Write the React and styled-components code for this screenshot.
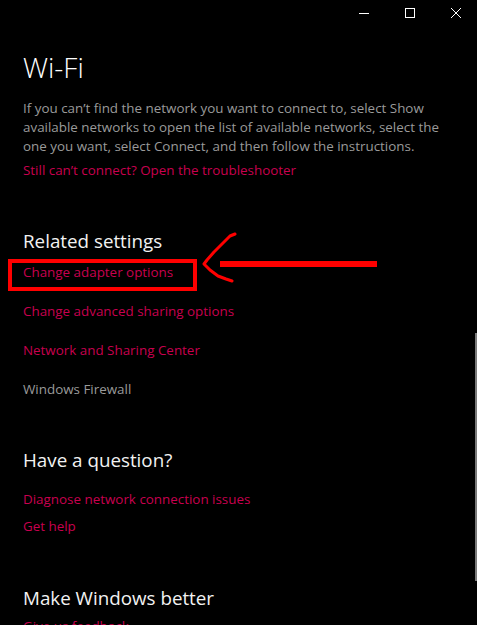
import React from 'react';
import styled, { createGlobalStyle } from 'styled-components';

const GlobalStyle = createGlobalStyle`
  html, body {
    margin: 0;
    padding: 0;
    background: #000;
    overflow: hidden;
  }
  body {
    font-family: "Open Sans", "Noto Sans", sans-serif;
  }
`;

const Window = styled.div`
  position: relative;
  width: 477px;
  height: 625px;
  background: #000;
  overflow: hidden;
`;

const TitleBar = styled.div`
  display: flex;
  justify-content: flex-end;
  height: 26px;
  margin-right: -2px;
`;

const CaptionButton = styled.div`
  width: 46px;
  display: flex;
  align-items: center;
  justify-content: center;
  svg {
    display: block;
  }
`;

const Content = styled.main`
  padding: 0 0 0 23px;
`;

const PageTitle = styled.h1`
  margin: 22px 0 0;
  font-size: 28px;
  font-weight: 300;
  line-height: 38px;
  color: #fff;
`;

const Description = styled.p`
  margin: 13px 0 0;
  width: 430px;
  font-size: 13.4px;
  line-height: 19px;
  color: #9a9a9a;
`;

const Section = styled.section`
  margin-top: ${(p) => p.$gap}px;
`;

const SectionTitle = styled.h2`
  margin: 0;
  font-size: 18.8px;
  font-weight: 400;
  line-height: 28px;
  color: #f2f2f2;
`;

const LinkList = styled.ul`
  list-style: none;
  margin: ${(p) => p.$top || 0}px 0 0;
  padding: 0;
  display: flex;
  flex-direction: column;
  gap: ${(p) => p.$gap}px;
`;

const Link = styled.li`
  font-size: 13.4px;
  line-height: 19px;
  color: ${(p) => (p.$muted ? '#9a9a9a' : '#c8004f')};
`;

const Scrollbar = styled.div`
  position: absolute;
  right: 0;
  top: 333px;
  width: 2px;
  height: 248px;
  background: #7a7a7a;
`;

const Markup = styled.svg`
  position: absolute;
  left: 0;
  top: 0;
  pointer-events: none;
`;

const Minimize = () => (
  <svg width="10" height="10" viewBox="0 0 10 10">
    <path d="M0 5.5h10" stroke="#fff" strokeWidth="1" />
  </svg>
);

const Maximize = () => (
  <svg width="10" height="10" viewBox="0 0 10 10">
    <rect x="0.5" y="0.5" width="9" height="9" fill="none" stroke="#fff" strokeWidth="1" />
  </svg>
);

const Close = () => (
  <svg width="10" height="10" viewBox="0 0 10 10">
    <path d="M0 0l10 10M10 0L0 10" stroke="#fff" strokeWidth="1" />
  </svg>
);

const related = [
  { label: 'Change adapter options' },
  { label: 'Change advanced sharing options' },
  { label: 'Network and Sharing Center' },
  { label: 'Windows Firewall', muted: true },
];

const App = () => (
  <>
    <GlobalStyle />
    <Window>
      <TitleBar>
        <CaptionButton><Minimize /></CaptionButton>
        <CaptionButton><Maximize /></CaptionButton>
        <CaptionButton><Close /></CaptionButton>
      </TitleBar>
      <Content>
        <PageTitle>Wi-Fi</PageTitle>
        <Description>
          If you can’t find the network you want to connect to, select Show available networks to
          open the list of available networks, select the one you want, select Connect, and then
          follow the instructions.
        </Description>
        <LinkList $gap={0} $top={5}>
          <Link>Still can’t connect? Open the troubleshooter</Link>
        </LinkList>

        <Section $gap={47}>
          <SectionTitle>Related settings</SectionTitle>
          <LinkList $gap={20} $top={8}>
            {related.map((item) => (
              <Link key={item.label} $muted={item.muted}>
                {item.label}
              </Link>
            ))}
          </LinkList>
        </Section>

        <Section $gap={47}>
          <SectionTitle>Have a question?</SectionTitle>
          <LinkList $gap={8} $top={16}>
            <Link>Diagnose network connection issues</Link>
            <Link>Get help</Link>
          </LinkList>
        </Section>

        <Section $gap={48}>
          <SectionTitle>Make Windows better</SectionTitle>
          <LinkList $gap={8} $top={5}>
            <Link>Give us feedback</Link>
          </LinkList>
        </Section>
      </Content>

      <Markup width="477" height="625">
        <rect x="10" y="261" width="185" height="28" fill="none" stroke="#ff0000" strokeWidth="4" />
        <path
          d="M235 234 L230 236 L222 244 L214 252 L207 260 L204 264 L210 270 L218 276 L226 279 L232 281"
          fill="none"
          stroke="#ff0000"
          strokeWidth="3"
          strokeLinecap="round"
          strokeLinejoin="round"
        />
        <rect x="220" y="261" width="157" height="6" fill="#ff0000" />
      </Markup>
      <Scrollbar />
    </Window>
  </>
);

export default App;
